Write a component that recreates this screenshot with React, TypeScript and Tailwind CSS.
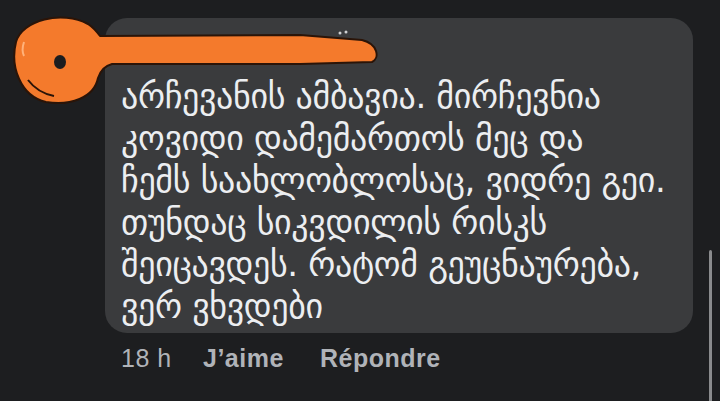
import React from "react";

const lines = [
  "არჩევანის ამბავია. მირჩევნია",
  "კოვიდი დამემართოს მეც და",
  "ჩემს საახლობლოსაც, ვიდრე გეი.",
  "თუნდაც სიკვდილის რისკს",
  "შეიცავდეს. რატომ გეუცნაურება,",
  "ვერ ვხვდები",
];

function Scribble() {
  // orange marker covering the avatar and the name
  return (
    <svg
      className="absolute left-0 top-0"
      width="400"
      height="120"
      viewBox="0 0 400 120"
    >
      <path
        d="M16 42 C22 20 62 10 88 24 C94 28 97 32 100 36 L300 35 L362 40 C378 44 380 58 372 62 L300 64 L112 64 C104 66 100 72 98 78 C94 98 70 106 46 102 C20 96 10 66 16 42 Z"
        fill="#f47a2c"
        stroke="#2a1408"
        strokeWidth="2"
        strokeLinejoin="round"
      />
      <ellipse cx="60" cy="62" rx="6" ry="7" fill="#1c1d1f" />
      <path d="M24 42 C22 48 22 52 24 56" stroke="#ffb27a" strokeWidth="2" fill="none" />
      <path d="M28 80 C34 88 44 94 54 96" stroke="#2a1408" strokeWidth="2" fill="none" />
      <circle cx="340" cy="33" r="1.5" fill="#cfd0d2" />
      <circle cx="346" cy="32" r="1.5" fill="#cfd0d2" />
    </svg>
  );
}

export default function App() {
  return (
    <div
      className="relative w-[720px] h-[401px] overflow-hidden bg-[#1d1e20]"
      style={{ fontFamily: '"DejaVu Sans", sans-serif' }}
    >
      <div className="flex pt-[18px]">
        <div className="w-[105px] shrink-0" />
        <div className="w-[588px] rounded-[22px] bg-[#3a3b3d] pl-[16px] pr-2 pt-[57px] pb-[6px]">
          {lines.map((line, i) => (
            <div
              key={i}
              className="text-[34px] leading-[42px] text-[#eceef1] whitespace-nowrap tracking-[-0.01em]"
            >
              {line}
            </div>
          ))}
        </div>
      </div>
      <div
        className="flex items-center pl-[121px] pt-[10px] text-[25px] leading-[30px] tracking-[0.02em] text-[#b0b3b8]"
        style={{ fontFamily: '"Liberation Sans", Arial, sans-serif' }}
      >
        <span className="w-[82px]">18 h</span>
        <span className="w-[117px] font-semibold">J’aime</span>
        <span className="font-semibold">Répondre</span>
      </div>
      <div className="absolute right-[8px] top-[250px] h-[160px] w-[3px] rounded-full bg-[#8a8b8d]" />
      <Scribble />
    </div>
  );
}
